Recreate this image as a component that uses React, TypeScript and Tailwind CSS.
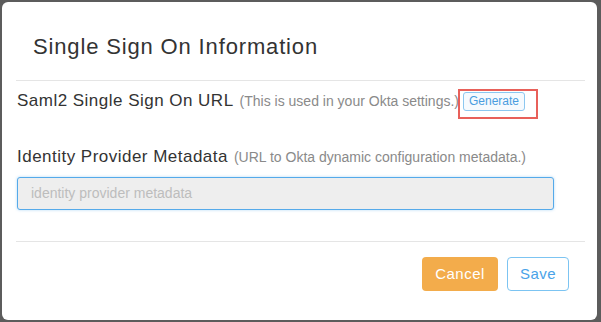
import React from 'react';

// Single Sign On settings dialog

const font = { fontFamily: '"Liberation Sans", Arial, sans-serif' };

const FieldLabel: React.FC<{ title: string; hint: string; children?: React.ReactNode }> = ({ title, hint, children }) => (
  <div className="flex items-center h-[22px] leading-[22px]">
    <span className="text-[17px] tracking-[0.48px] text-[#333]">{title}</span>
    <span className="ml-[6px] text-[14px] text-[#8a8a8a]">{hint}</span>
    {children}
  </div>
);

export default function App() {
  return (
    <div className="w-[601px] h-[322px] bg-[#5c5c5c] pt-[2px] pl-[2px] pr-[4px] pb-[2px]" style={font}>
      <div className="relative h-full bg-white rounded-[6px] px-[14px] pr-[12px] flex flex-col">
        {/* header */}
        <div className="border-b border-[#e5e5e5] pt-[31px] pb-[19px] pl-[17px]">
          <h1 className="text-[22px] leading-[28px] tracking-[0.85px] text-[#333]">Single Sign On Information</h1>
        </div>

        {/* body */}
        <div className="pt-[9px] pl-[1px] pb-[31px] border-b border-[#e5e5e5]">
          <FieldLabel title="Saml2 Single Sign On URL" hint="(This is used in your Okta settings.)">
            <div className="relative ml-[4px] flex">
              <button className="h-[19px] px-[5px] rounded-[3px] border border-[#8cc7f0] bg-[#f6fafe] text-[12px] leading-[16px] text-[#4a9de0]">
                Generate
              </button>
              <div className="absolute -left-[5px] -top-[3px] w-[80px] h-[30px] border-2 border-[#e8605a] pointer-events-none" />
            </div>
          </FieldLabel>

          <div className="mt-[34px]">
            <FieldLabel title="Identity Provider Metadata" hint="(URL to Okta dynamic configuration metadata.)" />
          </div>

          <div className="mt-[9px] w-[537px] h-[33px] rounded-[3px] border border-[#55aaea] bg-[#eeeeee] shadow-[0_0_3px_rgba(85,170,234,0.45)] flex items-center px-[13px]">
            <input
              readOnly
              placeholder="identity provider metadata"
              className="w-full bg-transparent text-[14px] outline-none placeholder:text-[#bdbdbd]"
            />
          </div>
        </div>

        {/* footer */}
        <div className="flex justify-end gap-[9px] pt-[15px] pr-[16px]">
          <button className="h-[34px] w-[76px] rounded-[4px] bg-[#f3ac4b] text-white text-[15px] tracking-[0.5px]">
            Cancel
          </button>
          <button className="h-[34px] w-[62px] rounded-[4px] border-[1.5px] border-[#7cc4f2] bg-white text-[#4aa3e8] text-[15px] tracking-[0.5px]">
            Save
          </button>
        </div>
      </div>
    </div>
  );
}
